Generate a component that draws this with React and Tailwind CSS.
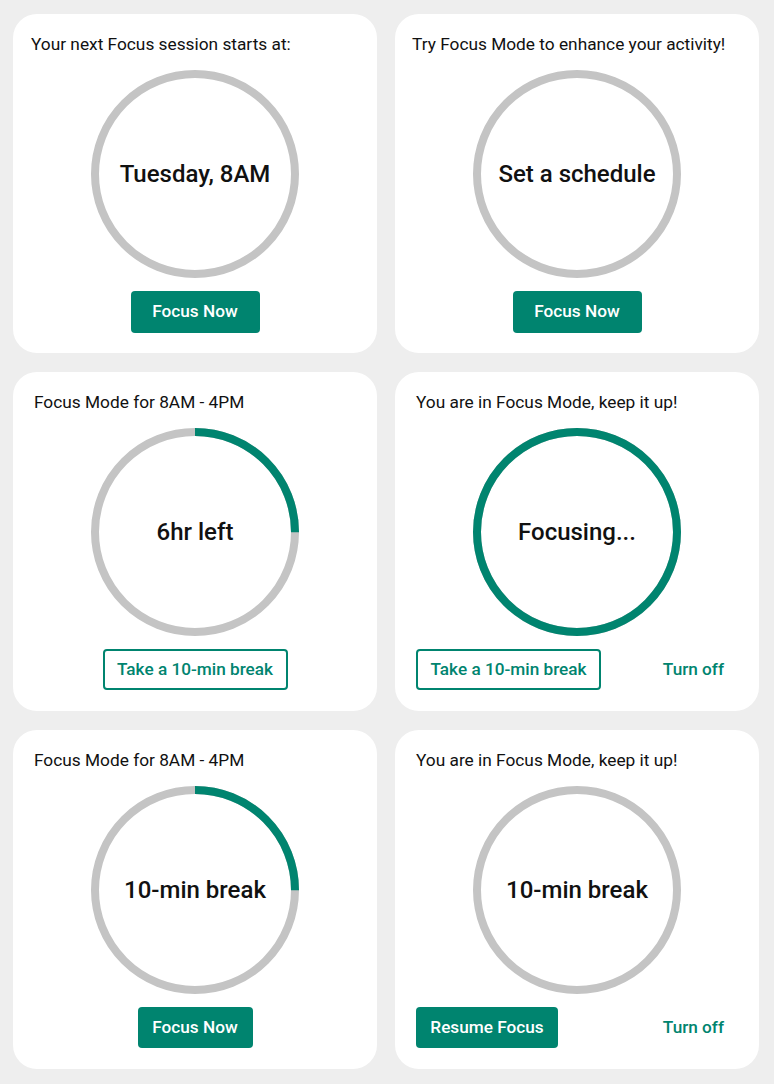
import React from 'react';

const TEAL = '#00846f';
const C = 2 * Math.PI * 100;

const Ring = ({ progress = 0, label }) => (
  <div className="relative w-[208px] h-[208px] mx-auto">
    <svg width="208" height="208" viewBox="0 0 208 208" className="absolute inset-0">
      <circle cx="104" cy="104" r="100" fill="none" stroke="#c4c4c4" strokeWidth="8" />
      {progress > 0 && (
        <circle
          cx="104"
          cy="104"
          r="100"
          fill="none"
          stroke={TEAL}
          strokeWidth="8"
          strokeDasharray={`${C * progress} ${C}`}
          transform="rotate(-90 104 104)"
        />
      )}
    </svg>
    <div className="absolute inset-0 flex items-center justify-center text-[24px] font-medium text-[#111]">
      {label}
    </div>
  </div>
);

const Filled = ({ children, width }) => (
  <button className={`${width} h-[41px] rounded-[4px] bg-[#00846f] text-white text-[17.2px] font-medium`}>
    {children}
  </button>
);

const Outline = ({ children }) => (
  <button className="w-[185px] h-[41px] rounded-[4px] border-2 border-[#00846f] text-[#00846f] text-[17.2px] font-medium">
    {children}
  </button>
);

const TurnOff = () => (
  <button className="px-[14px] h-[41px] text-[#00846f] text-[17.2px] font-medium">Turn off</button>
);

const Card = ({ title, pad = 'pl-[21px]', progress, label, children, split }) => (
  <div className="bg-white rounded-[24px] h-[339px] flex flex-col">
    <div className={`pt-[20px] leading-[20px] text-[17.3px] text-[#111] ${pad}`}>{title}</div>
    <div className="mt-[16px]">
      <Ring progress={progress} label={label} />
    </div>
    <div className={`mt-[13px] flex items-center ${split ? 'justify-between px-[21px]' : 'justify-center'}`}>
      {children}
    </div>
  </div>
);

export default function App() {
  return (
    <div
      className="min-h-screen bg-[#eeeeee] pl-[13px] pt-[14px] pb-[16px]"
      style={{ fontFamily: 'Roboto, "Noto Sans", sans-serif' }}
    >
      <div className="grid grid-cols-[364px_364px] gap-x-[18px] gap-y-[19px]">
        <Card title="Your next Focus session starts at:" pad="pl-[18px]" label="Tuesday, 8AM">
          <Filled width="w-[129px] h-[42px]">Focus Now</Filled>
        </Card>
        <Card title="Try Focus Mode to enhance your activity!" pad="pl-[17px]" label="Set a schedule">
          <Filled width="w-[129px] h-[42px]">Focus Now</Filled>
        </Card>
        <Card title="Focus Mode for 8AM - 4PM" progress={0.25} label="6hr left">
          <Outline>Take a 10-min break</Outline>
        </Card>
        <Card title="You are in Focus Mode, keep it up!" progress={1} label="Focusing..." split>
          <Outline>Take a 10-min break</Outline>
          <TurnOff />
        </Card>
        <Card title="Focus Mode for 8AM - 4PM" progress={0.25} label="10-min break">
          <Filled width="w-[115px]">Focus Now</Filled>
        </Card>
        <Card title="You are in Focus Mode, keep it up!" label="10-min break" split>
          <Filled width="w-[142px]">Resume Focus</Filled>
          <TurnOff />
        </Card>
      </div>
    </div>
  );
}
